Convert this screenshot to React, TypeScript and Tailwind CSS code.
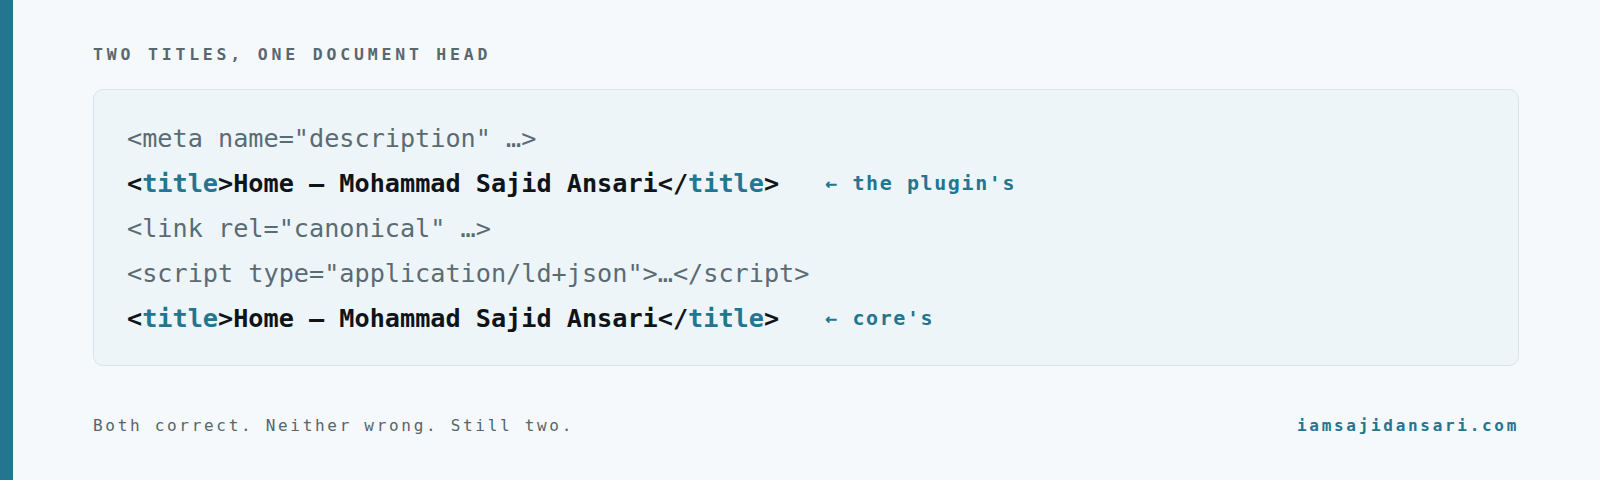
const mono = "font-['DejaVu_Sans_Mono','Liberation_Mono',monospace]";

type Line = {
    text?: string;
    title?: boolean;
    note?: string;
};

const lines: Line[] = [
    {text: '<meta name="description" …>'},
    {title: true, note: "← the plugin's"},
    {text: '<link rel="canonical" …>'},
    {text: '<script type="application/ld+json">…</script>'},
    {title: true, note: "← core's"},
];

function TitleTag() {
    return (
        <span className="font-bold text-[#0e1418]">
            &lt;<span className="text-[#237590]">title</span>&gt;Home — Mohammad Sajid Ansari&lt;/<span className="text-[#237590]">title</span>&gt;
        </span>
    );
}

export default function App() {
    return (
        <div className={`flex h-[480px] w-full bg-[#f5f9fb] ${mono}`}>
            <div className="w-[13px] shrink-0 bg-[#247590]" />
            <div className="flex-1 pl-[80px] pr-[81px] pt-[43px]">
                <div className="h-[24px] text-[16.5px] leading-[24px] font-bold tracking-[3.8px] text-[#59676f]">
                    TWO TITLES, ONE DOCUMENT HEAD
                </div>

                <div className="mt-[22px] rounded-[10px] border border-[#d8e4eb] bg-[#eef5f9] pt-[26px] pb-[24px] pl-[33px]">
                    {lines.map((line, i) => (
                        <div key={i} className="flex h-[45px] items-center text-[25.2px] leading-[45px] whitespace-pre">
                            {line.title ? <TitleTag /> : <span className="text-[#5b6b74]">{line.text}</span>}
                            {line.note && (
                                <span className="ml-[46px] text-[20px] font-bold tracking-[1.6px] text-[#237590]">
                                    {line.note}
                                </span>
                            )}
                        </div>
                    ))}
                </div>

                <div className="mt-[48px] flex h-[24px] items-center justify-between text-[16px] leading-[24px] tracking-[2.7px]">
                    <span className="text-[#56646c]">Both correct. Neither wrong. Still two.</span>
                    <span className="font-bold text-[#237590]">iamsajidansari.com</span>
                </div>
            </div>
        </div>
    );
}
